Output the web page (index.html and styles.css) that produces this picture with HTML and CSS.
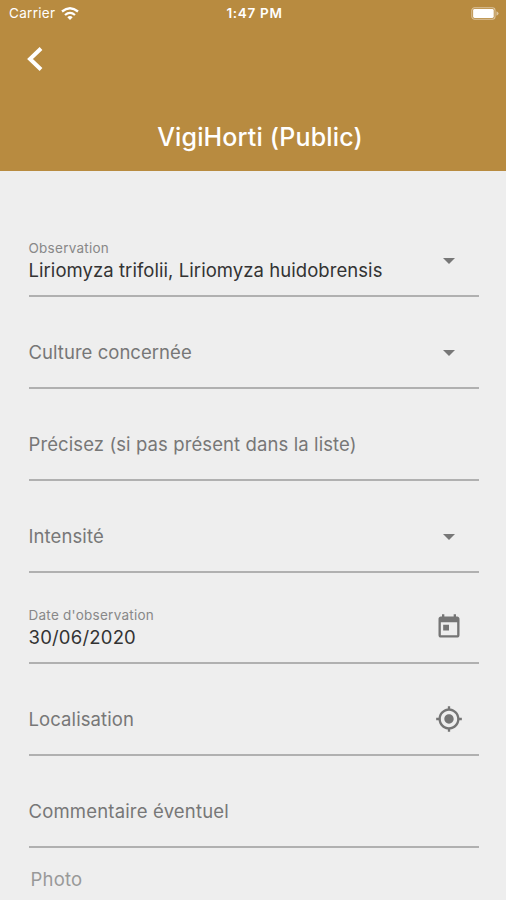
FILE: index.html
```html
<!DOCTYPE html>
<html lang="fr">
<head>
<meta charset="utf-8">
<meta name="viewport" content="width=device-width, initial-scale=1">
<title>VigiHorti</title>
<link rel="stylesheet" href="styles.css">
</head>
<body>
<header class="header">
  <div class="status">
    <div class="carrier"><span>Carrier</span>
      <svg class="wifi" viewBox="0 0 18 13" fill="none" stroke="#fff" stroke-width="2.3"><path d="M1 4.5Q9-2 17 4.5M4 8Q9 3.700 14 8"/><path d="M9 13L6.300 10.200Q9 8 11.700 10.200Z" fill="#fff" stroke="none"/></svg>
    </div>
    <time class="clock">1:47 PM</time>
    <svg class="battery" viewBox="0 0 30 14"><rect x=".8" y=".8" width="25" height="12.400" rx="3" fill="none" stroke="#dcc59f" stroke-width="1.1"/><rect x="2.200" y="2.200" width="22.200" height="9.600" rx="1.5" fill="#fff"/><path d="M27.300 4.600Q29.600 5.300 29.600 7T27.300 9.400Z" fill="#dcc59f"/></svg>
  </div>
  <a class="back" href="#" aria-label="Retour"><svg viewBox="0 0 16 26" fill="none" stroke="#fff" stroke-width="4"><path d="M14 2.500L3 13L14 23.500"/></svg></a>
  <h1 class="title">VigiHorti (Public)</h1>
</header>
<main class="form">
  <div class="field">
    <div class="text"><span class="caption">Observation</span><span class="value species">Liriomyza trifolii, Liriomyza huidobrensis</span></div>
    <svg class="arrow" viewBox="0 0 12 6"><path d="M0 0H12L6 6Z"/></svg>
  </div>
  <div class="field">
    <span class="label culture">Culture concernée</span>
    <svg class="arrow" viewBox="0 0 12 6"><path d="M0 0H12L6 6Z"/></svg>
  </div>
  <div class="field"><span class="label">Précisez (si pas présent dans la liste)</span></div>
  <div class="field">
    <span class="label">Intensité</span>
    <svg class="arrow" viewBox="0 0 12 6"><path d="M0 0H12L6 6Z"/></svg>
  </div>
  <div class="field">
    <div class="text"><span class="caption">Date d'observation</span><span class="value date">30/06/2020</span></div>
    <svg class="icon" viewBox="0 0 24 24"><path d="M19 3h-1V1h-2v2H8V1H6v2H5c-1.110 0-1.990.9-1.990 2L3 19c0 1.100.89 2 2 2h14c1.100 0 2-.9 2-2V5c0-1.100-.9-2-2-2zm0 16H5V8h14v11zM7 10h5v5H7z"/></svg>
  </div>
  <div class="field">
    <span class="label">Localisation</span>
    <svg class="icon" viewBox="0 0 24 24"><path d="M12 8c-2.210 0-4 1.790-4 4s1.790 4 4 4 4-1.790 4-4-1.790-4-4-4zm8.940 3c-.46-4.170-3.770-7.480-7.940-7.940V1h-2v2.060C6.830 3.520 3.520 6.830 3.060 11H1v2h2.060c.46 4.170 3.770 7.480 7.940 7.940V23h2v-2.060c4.170-.46 7.480-3.770 7.940-7.940H23v-2h-2.060zM12 19c-3.870 0-7-3.130-7-7s3.130-7 7-7 7 3.130 7 7-3.130 7-7 7z"/></svg>
  </div>
  <div class="field"><span class="label comment">Commentaire éventuel</span></div>
  <div class="photo">Photo</div>
</main>
</body>
</html>
```
FILE: styles.css
```css
* { box-sizing: border-box; }
body {
  margin: 0;
  height: 900px;
  overflow: hidden;
  background: #eee;
  font-family: Inter, "Liberation Sans", sans-serif;
}
.header {
  height: 171px;
  background: #b88b40;
  color: #fff;
}
.status {
  height: 27px;
  padding: 0 6px 0 9px;
  display: grid;
  grid-template-columns: 1fr auto 1fr;
  align-items: center;
  font-size: 13.5px;
  line-height: 27px;
}
.carrier { display: flex; align-items: center; gap: 6px; letter-spacing: .3px; }
.wifi { width: 18px; height: 13px; }
.clock { font-weight: 600; font-size: 13.5px; letter-spacing: .7px; }
.battery { width: 30px; height: 13px; justify-self: end; margin-top: -1px; }
.back { display: block; width: 16px; height: 26px; margin: 19px 0 0 27px; }
.back svg { display: block; width: 16px; height: 26px; }
.title {
  margin: 49px 0 0;
  padding-left: 14px;
  text-align: center;
  font-size: 25px;
  line-height: 32px;
  letter-spacing: .15px;
  font-weight: 500;
}
.form { padding: 34.5px 27px 0 28.5px; }
.field {
  height: 91.75px;
  padding: 20px 16px 0 0;
  display: flex;
  align-items: center;
  justify-content: space-between;
  border-bottom: 2px solid #b0b0b0;
}
.label, .value { font-size: 18.5px; line-height: 24px; letter-spacing: .1px; white-space: nowrap; }
.label { color: #777; }
.culture { letter-spacing: .04px; }
.comment { letter-spacing: .18px; }
.value { color: #333; }
.species { letter-spacing: .06px; }
.date { letter-spacing: .2px; }
.text { display: flex; flex-direction: column; }
.caption { font-size: 13.5px; line-height: 20px; letter-spacing: .26px; color: #888; }
.arrow { width: 12px; height: 6px; margin: 2px 8px 0 0; fill: #777; }
.icon { width: 28px; height: 28px; fill: #757575; }
.photo { padding: 18px 0 0 2px; color: #999; font-size: 18.5px; line-height: 26px; letter-spacing: .2px; }
```
